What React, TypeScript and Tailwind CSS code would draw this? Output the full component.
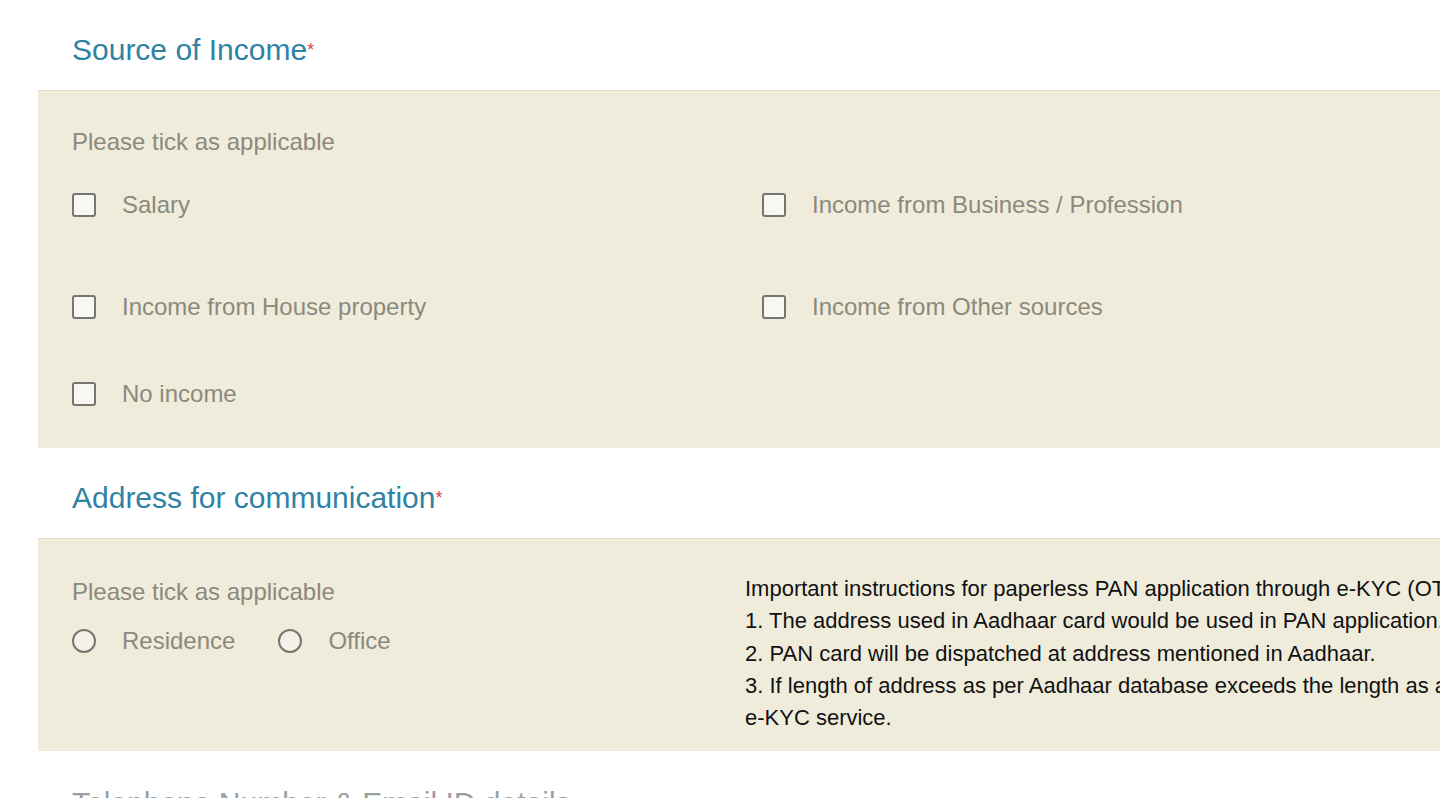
const heading = "text-[30px] leading-[32px] text-[#2f82a4]";
const muted = "text-[24px] leading-[26px] text-[#8b897c]";

const Checkbox = () => (
  <span className="inline-block h-[24px] w-[24px] shrink-0 rounded-[3px] border-[2.5px] border-[#77756f] bg-[#f8f7f2]" />
);

const Radio = () => (
  <span className="inline-block h-[24px] w-[24px] shrink-0 rounded-full border-[2.5px] border-[#77756f] bg-[#f4f2e8]" />
);

const CheckItem = ({ label }: { label: string }) => (
  <div className="flex h-[26px] items-center gap-[26px]">
    <Checkbox />
    <span className={muted}>{label}</span>
  </div>
);

const SectionTitle = ({ title }: { title: string }) => (
  <div className="pl-[34px] pt-[34px] pb-[24px]">
    <h2 className={heading}>
      {title}
      <span className="align-top text-[18px] text-[#d2454a]">*</span>
    </h2>
  </div>
);

export default function App() {
  return (
    <div
      className="h-[810px] w-[1440px] overflow-hidden bg-white pl-[38px]"
      style={{ fontFamily: '"Liberation Sans", Arial, sans-serif' }}
    >
      <SectionTitle title="Source of Income" />

      {/* Source of income panel */}
      <div className="h-[358px] border-t border-[#e2dfcf] bg-[#efecdc] pl-[34px] pt-[38px]">
        <p className={muted}>Please tick as applicable</p>
        <div className="mt-[37px] grid grid-cols-[690px_1fr]">
          <CheckItem label="Salary" />
          <CheckItem label="Income from Business / Profession" />
        </div>
        <div className="mt-[76px] grid grid-cols-[690px_1fr]">
          <CheckItem label="Income from House property" />
          <CheckItem label="Income from Other sources" />
        </div>
        <div className="mt-[61px]">
          <CheckItem label="No income" />
        </div>
      </div>

      <SectionTitle title="Address for communication" />

      {/* Address panel */}
      <div className="grid h-[213px] grid-cols-[673px_1fr] border-t border-[#e2dfcf] bg-[#efecdc] pl-[34px]">
        <div className="pt-[40px]">
          <p className={muted}>Please tick as applicable</p>
          <div className="mt-[23px] flex items-center">
            <div className="flex h-[26px] items-center gap-[26px]">
              <Radio />
              <span className={muted}>Residence</span>
            </div>
            <div className="ml-[43px] flex h-[26px] items-center gap-[26px]">
              <Radio />
              <span className={muted}>Office</span>
            </div>
          </div>
        </div>
        <div className="overflow-hidden whitespace-nowrap pt-[34px] text-[22px] leading-[32.3px] text-[#111]">
          <p>Important instructions for paperless PAN application through e-KYC (OTP based)</p>
          <p>1. The address used in Aadhaar card would be used in PAN application.</p>
          <p>2. PAN card will be dispatched at address mentioned in Aadhaar.</p>
          <p>3. If length of address as per Aadhaar database exceeds the length as allowed, it will be truncated as per</p>
          <p>e-KYC service.</p>
        </div>
      </div>

      {/* Next section, clipped by the fold */}
      <div className="h-[47px] overflow-hidden pl-[34px] pt-[36px]">
        <h2 className="text-[30px] leading-[32px] text-[#9a9ea0]">Telephone Number &amp; Email ID details</h2>
      </div>
    </div>
  );
}
